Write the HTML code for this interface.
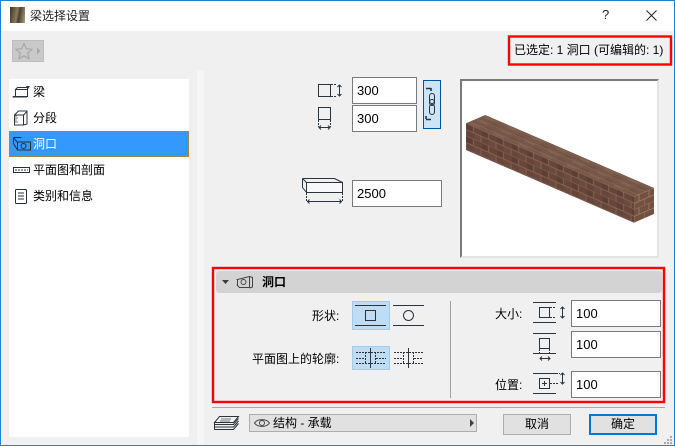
<!DOCTYPE html>
<html><head><meta charset="utf-8"><style>
html,body{margin:0;padding:0}
body{width:675px;height:446px;overflow:hidden;position:relative;background:#f0f0f0;font:12px "Liberation Sans","Noto Sans CJK SC",sans-serif;color:#000}
.a{position:absolute;box-sizing:border-box}
.t{position:absolute;white-space:nowrap;line-height:16px;height:16px}
.i{position:absolute;box-sizing:border-box;background:#fff;border:1px solid #7a7a7a;font-size:13px;line-height:25px;padding-left:4px}
svg{position:absolute;left:0;top:0}
</style></head><body>
<div class="a" style="left:0;top:0;width:675px;height:31px;background:#fff"></div>
<div class="a" style="left:10px;top:7px;width:15px;height:16px;background:linear-gradient(100deg,#3a3226 0%,#8a7a5c 45%,#4a4030 60%,#b0a080 100%)"></div>
<div class="t" style="left:30px;top:8px;font-size:12px;color:#222">梁选择设置</div>
<div class="t" style="left:602px;top:7px;font-size:13px;color:#222">?</div>
<div class="a" style="left:12px;top:40px;width:32px;height:22px;background:#c9c9c9;border:1px solid #bdbdbd"></div>
<div class="a" style="left:9px;top:79px;width:180px;height:358px;background:#fff"></div>
<div class="a" style="left:197px;top:71px;width:7px;height:374px;background:#f6f6f6"></div>
<div class="a" style="left:9px;top:131px;width:180px;height:26px;background:#3399ff;border:1px dotted #b0825a"></div>
<div class="t" style="left:33px;top:84px">梁</div>
<div class="t" style="left:33px;top:110px">分段</div>
<div class="t" style="left:33px;top:136px;color:#fff">洞口</div>
<div class="t" style="left:33px;top:162px">平面图和剖面</div>
<div class="t" style="left:33px;top:188px">类别和信息</div>
<div class="t" style="left:514px;top:42px">已选定: 1 洞口 (可编辑的: 1)</div>
<div class="i" style="left:352px;top:77px;width:65px;height:27px">300</div>
<div class="i" style="left:352px;top:105px;width:65px;height:27px">300</div>
<div class="i" style="left:352px;top:180px;width:90px;height:27px">2500</div>
<div class="a" style="left:423px;top:80px;width:18px;height:49px;background:#cce4f7;border:1px solid #005499"></div>
<div class="a" style="left:460px;top:79px;width:199px;height:179px;background:#fff;border:2px solid #e4e4e4;border-top-color:#7a7a7a;border-left-color:#7a7a7a"></div>
<div class="a" style="left:216px;top:271px;width:446px;height:22px;background:#d3d3d3;border-radius:3px"></div>
<div class="t" style="left:262px;top:274px;font-weight:bold">洞口</div>
<div class="a" style="left:352px;top:301px;width:38px;height:29px;background:#bfdcf3;border:1px solid #9fcdf0"></div>
<div class="a" style="left:352px;top:346px;width:38px;height:24px;background:#bfdcf3;border:1px solid #9fcdf0"></div>
<div class="t" style="left:312px;top:308px">形状:</div>
<div class="t" style="left:252px;top:351px">平面图上的轮廓:</div>
<div class="a" style="left:450px;top:301px;width:1px;height:97px;background:#a0a0a0"></div>
<div class="t" style="left:495px;top:306px">大小:</div>
<div class="t" style="left:495px;top:377px">位置:</div>
<div class="i" style="left:571px;top:300px;width:90px;height:27px">100</div>
<div class="i" style="left:571px;top:331px;width:90px;height:27px">100</div>
<div class="i" style="left:571px;top:371px;width:90px;height:27px">100</div>
<div class="a" style="left:212px;top:407px;width:453px;height:1px;background:#a8a8a8"></div>
<div class="a" style="left:249px;top:414px;width:228px;height:18px;background:#e1e1e1;border:1px solid #adadad"></div>
<div class="t" style="left:273px;top:415px">结构 - 承载</div>
<div class="a" style="left:503px;top:414px;width:68px;height:21px;background:#e1e1e1;border:1px solid #adadad;text-align:center;line-height:19px">取消</div>
<div class="a" style="left:589px;top:414px;width:68px;height:21px;background:#e1e1e1;border:2px solid #0078d7;text-align:center;line-height:17px">确定</div>

<svg width="675" height="446" viewBox="0 0 675 446" fill="none">
<defs>
<pattern id="f" width="15" height="13" patternUnits="userSpaceOnUse" patternTransform="matrix(1 .437 0 1 466 123)">
<rect width="15" height="13" fill="#674639"/>
<rect x="1" y="1" width="6" height="5" fill="#5e3e32"/><rect x="8" y="7" width="6" height="5" fill="#6f4a3c"/>
<path d="M0 6.500H15M0 13H15M7.500 0V6.500M0 6.500V13M15 6.500V13" stroke="#7f6557" stroke-width="1"/>
</pattern>
<pattern id="r" width="10" height="13" patternUnits="userSpaceOnUse" patternTransform="matrix(1 -.435 0 1 634 197)">
<rect width="10" height="13" fill="#74503f"/>
<path d="M0 6.500H10M0 13H10M5 0V6.500M0 6.500V13" stroke="#937868" stroke-width="1"/>
</pattern>
<pattern id="p" width="24" height="7" patternUnits="userSpaceOnUse" patternTransform="matrix(1 .433 1 -.43 466 123)">
<rect width="24" height="7" fill="#775848"/>
<rect x="2" y="1" width="10" height="2" fill="#826352"/><rect x="14" y="4" width="8" height="2" fill="#6e4f40"/>
<path d="M0 3.500H24" stroke="#826656" stroke-width=".8"/>
</pattern>
</defs>
<polygon points="466,123.300 485.300,115 654,188 634,196.700" fill="url(#p)"/>
<polygon points="466,123.300 634,196.700 634,222.700 466,150" fill="url(#f)"/>
<polygon points="634,196.700 654,188 654,214 634,222.700" fill="url(#r)"/>

<!-- red frames -->
<rect x="509" y="36.500" width="162" height="28" stroke="#f00" stroke-width="2.400"/>
<rect x="213" y="268" width="451" height="134" stroke="#f00" stroke-width="2.400"/>

<!-- window frame -->
<rect x=".5" y=".5" width="674" height="445" stroke="#1883d7"/>
<!-- close -->
<path d="M646.500 10.500l10 10M656.500 10.500l-10 10" stroke="#222" stroke-width="1"/>
<!-- star -->
<path d="M24 43.500l2.400 5.200 5.600.6-4.200 3.800 1.200 5.600-5-2.900-5 2.900 1.200-5.600-4.200-3.800 5.600-.6z" stroke="#a8a8a8" stroke-width="1.200"/>
<path d="M37 47.500l3.500 3.500-3.500 3.500z" fill="#a8a8a8"/>

<!-- list icons -->
<g stroke="#2b343b" stroke-width="1">
<path d="M15.500 89.500h12v7h-12zM15.500 89.500l2-2h10v7M13 96.500l2 0M13 96.500v.5h14" />
<path d="M26 86h4l-2 3z" fill="#2b343b" stroke="none"/>
<path d="M14.500 115l4-4h8.500v2.500l0 10.500-3.500 1h-9zM14.500 115h9v10M23.500 115l3.500-3.500"/>
<path d="M15 116h2M15 118h3M15 120h2M15 122h3" stroke="#777"/>
</g>
<g stroke="#24303a" stroke-width="1">
<path d="M13.500 137.500h8M13.500 137.500v6l4 6.500h13v-8h-13v7M13.500 137.500l4 5"/>
<circle cx="23.500" cy="146" r="2.500"/>
<path d="M13.500 167.500h16v5h-16z"/>
<path d="M15 170h13" stroke-dasharray="2 1"/>
<rect x="15.500" y="189.500" width="11" height="14" rx="1"/>
<path d="M18 193h6M18 196h6M18 199h6"/>
</g>

<!-- dims icons -->
<g stroke="#2b343b" stroke-width="1">
<rect x="318.500" y="84.500" width="12" height="12"/>
<path d="M331 84.500h6M331 96.500h6" stroke-dasharray="2 1"/>
<path d="M339.500 85v11M337.500 87l2-2 2 2M337.500 94l2 2 2-2"/>
<rect x="318.500" y="107.500" width="12" height="12"/>
<path d="M318.500 120v7M330.500 120v7" stroke-dasharray="2 1"/>
<path d="M319 127.500h11M321 125.500l-2 2 2 2M328 125.500l2 2-2 2"/>
<!-- link -->
<path d="M426 88.500h5M426 119.500h5M431 88v3M426 116v3" stroke-width="1.600"/>
<rect x="429.500" y="93.500" width="5" height="10" rx="2.500"/>
<rect x="429.500" y="99.500" width="5" height="6" rx="2.500"/>
<rect x="429.500" y="104.500" width="5" height="10" rx="2.500"/>
<!-- beam -->
<rect x="306.500" y="182.500" width="36" height="10" fill="#f8f8fa"/>
<path d="M302.500 178.500h32l8 4M302.500 178.500l4 4M302.500 178.500v9l4 5"/>
<path d="M306.500 193v9M342.500 193v9" stroke-dasharray="2 1"/>
<path d="M307 201.500h35M309.500 199.500l-2 2 2 2M339.500 199.500l2 2-2 2"/>
<!-- section icon -->
<path d="M237.500 279.500l12-3v11h-10l-2-2zM237.500 279.500h-1M237.500 285h-1M249.500 276.500l3 1v9.500l-3 1" stroke="#444"/>
<circle cx="243.500" cy="282" r="2.500" stroke="#444"/>
<!-- shapes -->
<path d="M355 305.500h31M355 325.500h31M393 305.500h31M393 325.500h31"/>
<rect x="365.500" y="310.500" width="10" height="10"/>
<circle cx="408.500" cy="315.500" r="5"/>
<path d="M356 352.500h30M356 363.500h30M394 352.500h29M394 363.500h29" stroke-dasharray="2 1"/>
<path d="M356 358.500h9M376 358.500h10M394 358.500h9M414 358.500h9" stroke-dasharray="2 1"/>
<path d="M370.500 348v20M408.500 348v20"/>
<path d="M365.500 352v12M375.500 352v12M403.500 352v12M413.500 352v12" stroke-dasharray="2 1"/>
<!-- dims right -->
<path d="M533 302.500h23M533 322.500h23"/>
<rect x="539.500" y="307.500" width="10" height="10"/>
<path d="M550 307.500h6M550 317.500h6" stroke-dasharray="2 1"/>
<path d="M562.500 307v11M560.500 309l2-2 2 2M560.500 316l2 2 2-2"/>
<path d="M533 333.500h23M533 353.500h23"/>
<rect x="539.500" y="338.500" width="10" height="10"/>
<path d="M539.500 349v6M549.500 349v6" stroke-dasharray="2 1"/>
<path d="M540 358.500h10M542 356.500l-2 2 2 2M548 356.500l2 2-2 2"/>
<path d="M533 373.500h23M533 393.500h23"/>
<rect x="539.500" y="378.500" width="10" height="10"/>
<path d="M542 383.500h5M544.500 381v5"/>
<path d="M550 383.500h9M556 373.500h4" stroke-dasharray="2 1"/>
<path d="M562.500 373v11M560.500 375l2-2 2 2M560.500 382l2 2 2-2"/>
<!-- layers -->
<path d="M219.500 416.500h19l-5 6h-19zM214.500 422.500v2h19l5-6M214.500 425v2h19l5-6M214.500 427.500v2h19l5-6"/>
<path d="M221 419h10M220 421h10" stroke="#777"/>
<!-- eye -->
<path d="M254.500 423c3-4.500 12-4.500 15 0-3 4.500-12 4.500-15 0z" stroke="#444"/>
<circle cx="262" cy="423" r="2.500" stroke="#444"/>
</g>
<path d="M222 280h7l-3.500 4z" fill="#3c3c3c"/>
<path d="M470 419l4 4-4 4z" fill="#404040"/>
<g fill="#a8a8a8"><rect x="670" y="436" width="2" height="2"/><rect x="667" y="439" width="2" height="2"/><rect x="670" y="439" width="2" height="2"/><rect x="664" y="442" width="2" height="2"/><rect x="667" y="442" width="2" height="2"/><rect x="670" y="442" width="2" height="2"/></g>
</svg>
</body></html>
